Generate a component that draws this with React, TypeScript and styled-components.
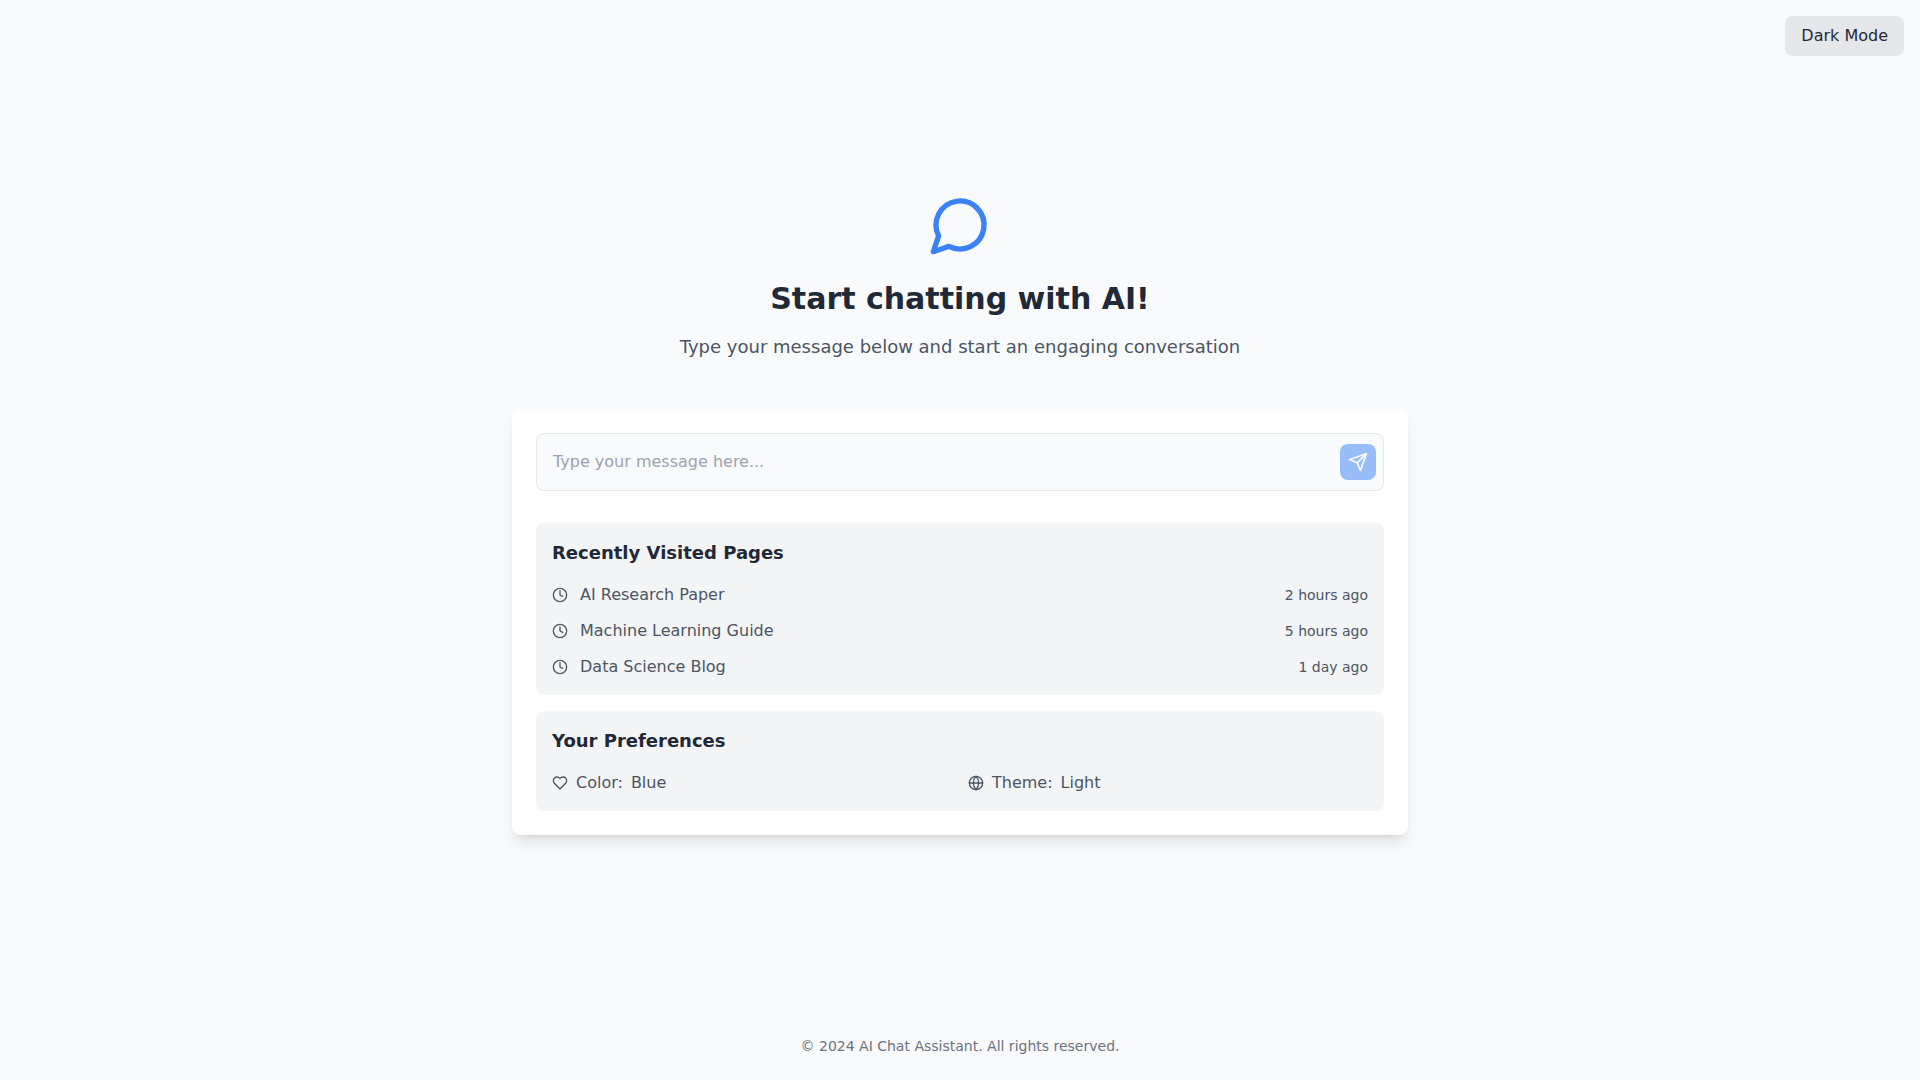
import React, { useState } from 'react';
import styled, { createGlobalStyle, ThemeProvider } from 'styled-components';
import { Clock, Globe } from 'lucide-react';

const light = {
  page: '#f9fafb',
  card: '#ffffff',
  panel: '#f3f4f6',
  field: '#f9fafb',
  line: '#e5e7eb',
  toggle: '#e5e7eb',
  heading: '#1f2937',
  text: '#4b5563',
  muted: '#6b7280',
  placeholder: '#9ca3af',
  accent: '#3b82f6',
};

const dark: typeof light = {
  page: '#111827',
  card: '#1f2937',
  panel: '#374151',
  field: '#374151',
  line: '#4b5563',
  toggle: '#374151',
  heading: '#ffffff',
  text: '#d1d5db',
  muted: '#9ca3af',
  placeholder: '#9ca3af',
  accent: '#3b82f6',
};

type P = { theme: any };

const GlobalStyle = createGlobalStyle`
  *, *::before, *::after { box-sizing: border-box; }
  body {
    margin: 0;
    font-family: "DejaVu Sans", sans-serif;
    font-size: 16px;
    line-height: 24px;
  }
  h1, h2, p, ul, dl, dd { margin: 0; padding: 0; }
  ul { list-style: none; }
  button, input { font: inherit; }
`;

const Page = styled.div`
  display: flex;
  flex-direction: column;
  min-height: 100vh;
  background: ${({ theme }: P) => theme.page};
  color: ${({ theme }: P) => theme.text};
`;

const Header = styled.header`
  display: flex;
  justify-content: flex-end;
  padding: 16px 16px 0;
`;

const ThemeToggle = styled.button`
  padding: 8px 16px;
  border: 0;
  border-radius: 8px;
  background: ${({ theme }: P) => theme.toggle};
  color: ${({ theme }: P) => theme.heading};
  cursor: pointer;
`;

const Main = styled.main`
  flex: 1;
  display: flex;
  flex-direction: column;
  align-items: center;
  justify-content: center;
  gap: 48px;
  padding: 0 16px 64px;
`;

const Hero = styled.div`
  display: flex;
  flex-direction: column;
  align-items: center;
  text-align: center;
`;

const Icon = styled.svg.attrs({ viewBox: '0 0 24 24', 'aria-hidden': true })<{ $size: number }>`
  display: block;
  width: ${({ $size }) => $size}px;
  height: ${({ $size }) => $size}px;
  fill: none;
  stroke: currentColor;
  stroke-width: 2;
  stroke-linecap: round;
  stroke-linejoin: round;
`;

const HeroIcon = styled(Icon)`
  margin-bottom: 24px;
  color: ${({ theme }: P) => theme.accent};
`;

const Title = styled.h1`
  margin-bottom: 16px;
  font-size: 30px;
  line-height: 36px;
  font-weight: 700;
  color: ${({ theme }: P) => theme.heading};
`;

const Subtitle = styled.p`
  font-size: 18px;
  line-height: 28px;
`;

const Card = styled.section`
  width: 100%;
  max-width: 896px;
  padding: 24px;
  border-radius: 8px;
  background: ${({ theme }: P) => theme.card};
  box-shadow: 0 10px 15px -3px rgba(0, 0, 0, 0.1), 0 4px 6px -4px rgba(0, 0, 0, 0.1);
`;

const MessageForm = styled.form`
  display: grid;
  grid-template-areas: "field";
  align-items: center;
  margin-bottom: 32px;
`;

const MessageInput = styled.input`
  grid-area: field;
  width: 100%;
  padding: 16px 64px 16px 16px;
  border: 1px solid ${({ theme }: P) => theme.line};
  border-radius: 8px;
  background: ${({ theme }: P) => theme.field};
  color: ${({ theme }: P) => theme.heading};

  &::placeholder { color: ${({ theme }: P) => theme.placeholder}; opacity: 1; }
`;

const SendButton = styled.button`
  grid-area: field;
  justify-self: end;
  display: flex;
  margin-right: 8px;
  padding: 8px;
  border: 0;
  border-radius: 8px;
  background: ${({ theme }: P) => theme.accent};
  color: #ffffff;
  cursor: pointer;

  &:disabled { opacity: 0.5; cursor: default; }
`;

const Panels = styled.div`
  display: grid;
  gap: 16px;
`;

const Panel = styled.section`
  padding: 16px;
  border-radius: 8px;
  background: ${({ theme }: P) => theme.panel};
`;

const PanelTitle = styled.h2`
  margin-bottom: 16px;
  font-size: 18px;
  line-height: 28px;
  font-weight: 700;
  color: ${({ theme }: P) => theme.heading};
`;

const VisitList = styled.ul`
  display: grid;
  gap: 12px;
`;

const Visit = styled.li`
  display: flex;
  align-items: center;
  gap: 12px;
`;

const VisitTime = styled.time`
  margin-left: auto;
  font-size: 14px;
  line-height: 20px;
`;

const Preferences = styled.dl`
  display: grid;
  grid-template-columns: 1fr 1fr;
  gap: 16px;
`;

const Preference = styled.div`
  display: flex;
  align-items: center;
  gap: 8px;
`;

const Footer = styled.footer`
  padding: 0 16px 24px;
  text-align: center;
  font-size: 14px;
  line-height: 20px;
  color: ${({ theme }: P) => theme.muted};
`;

const visits = [
  { title: 'AI Research Paper', time: '2 hours ago' },
  { title: 'Machine Learning Guide', time: '5 hours ago' },
  { title: 'Data Science Blog', time: '1 day ago' },
];

export default function App() {
  const [isDark, setIsDark] = useState(false);
  const [message, setMessage] = useState('');

  const send = (event: React.FormEvent) => {
    event.preventDefault();
    setMessage('');
  };

  return (
    <ThemeProvider theme={isDark ? dark : light}>
      <GlobalStyle />
      <Page>
        <Header>
          <ThemeToggle type="button" onClick={() => setIsDark(!isDark)}>
            {isDark ? 'Light Mode' : 'Dark Mode'}
          </ThemeToggle>
        </Header>
        <Main>
          <Hero>
            <HeroIcon $size={64}>
              <path d="M7.9 20A9 9 0 1 0 4 16.1L2 22Z" />
            </HeroIcon>
            <Title>Start chatting with AI!</Title>
            <Subtitle>Type your message below and start an engaging conversation</Subtitle>
          </Hero>
          <Card>
            <MessageForm onSubmit={send}>
              <MessageInput
                type="text"
                aria-label="Message"
                placeholder="Type your message here..."
                value={message}
                onChange={(event) => setMessage(event.target.value)}
              />
              <SendButton type="submit" aria-label="Send message" disabled={!message.trim()}>
                <Icon $size={20}>
                  <path d="m22 2-7 20-4-9-9-4Z" />
                  <path d="M22 2 11 13" />
                </Icon>
              </SendButton>
            </MessageForm>
            <Panels>
              <Panel>
                <PanelTitle>Recently Visited Pages</PanelTitle>
                <VisitList>
                  {visits.map(({ title, time }) => (
                    <Visit key={title}>
                      <Clock size={16} aria-hidden />
                      <span>{title}</span>
                      <VisitTime>{time}</VisitTime>
                    </Visit>
                  ))}
                </VisitList>
              </Panel>
              <Panel>
                <PanelTitle>Your Preferences</PanelTitle>
                <Preferences>
                  <Preference>
                    <Icon $size={16}>
                      <path d="M19 14c1.49-1.46 3-3.21 3-5.5A5.5 5.5 0 0 0 16.5 3c-1.76 0-3 .5-4.5 2-1.5-1.5-2.74-2-4.5-2A5.5 5.5 0 0 0 2 8.5c0 2.3 1.5 4.05 3 5.5l7 7Z" />
                    </Icon>
                    <dt>Color:</dt>
                    <dd>Blue</dd>
                  </Preference>
                  <Preference>
                    <Globe size={16} aria-hidden />
                    <dt>Theme:</dt>
                    <dd>{isDark ? 'Dark' : 'Light'}</dd>
                  </Preference>
                </Preferences>
              </Panel>
            </Panels>
          </Card>
        </Main>
        <Footer>© 2024 AI Chat Assistant. All rights reserved.</Footer>
      </Page>
    </ThemeProvider>
  );
}
